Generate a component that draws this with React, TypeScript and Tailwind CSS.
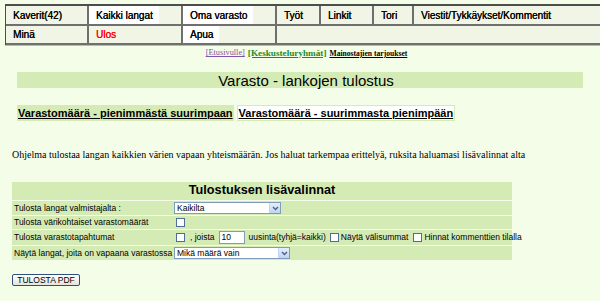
import React from 'react';

const sans = { fontFamily: '"Liberation Sans", Arial, sans-serif' };
const serif = { fontFamily: '"Liberation Serif", "Times New Roman", serif' };

const navTop = [
  { label: 'Kaverit(42)', white: false },
  { label: 'Kaikki langat', white: true },
  { label: 'Oma varasto', white: true },
  { label: 'Työt', white: false },
  { label: 'Linkit', white: false },
  { label: 'Tori', white: false },
  { label: 'Viestit/Tykkäykset/Kommentit', white: false },
];

// little XP-style dropdown
const Select = ({ value, width }: { value: string; width: string }) => (
  <div
    className={`flex h-[12px] items-center border border-[#7f9db9] bg-white ${width}`}
  >
    <span className="flex-1 pl-[2px] text-[8.5px] leading-none text-black">{value}</span>
    <span className="flex h-full w-[11px] items-center justify-center border-l border-[#c3d3fd] bg-gradient-to-b from-[#e6eefc] to-[#c0d3f5]">
      <svg width="7" height="5" viewBox="0 0 7 5">
        <path d="M1 1 L3.5 3.5 L6 1" stroke="#4d6185" strokeWidth="1.4" fill="none" />
      </svg>
    </span>
  </div>
);

const Check = () => (
  <span className="inline-block h-[9px] w-[9px] shrink-0 border border-[#4e6e97] bg-white" />
);

export default function App() {
  return (
    <div className="min-h-[301px] w-full overflow-hidden bg-[#f4fde7] text-black" style={sans}>
      {/* top navigation table */}
      <div className="pl-[5px] pt-[4px]">
        <div className="w-[700px] border-l border-t-2 border-[#4d4d4d] shadow-[0_1px_0_#b9bdb0] [text-shadow:0.3px_0_0_currentColor]">
          <div className="grid grid-cols-[83px_94px_94px_44px_53px_40px_292px]">
            {navTop.map((c) => (
              <div
                key={c.label}
                className="flex h-[20px] items-center border-b-2 border-r-2 border-[#6f6f6f] bg-[#f1f5e6] text-[10px]"
              >
                <span className={`h-full pl-[7px] pr-[6px] leading-[19px] ${c.white ? 'bg-white' : ''}`}>
                  {c.label}
                </span>
              </div>
            ))}
          </div>
          <div className="grid grid-cols-[83px_94px_94px_429px]">
            <div className="flex h-[19px] items-center border-b-2 border-r-2 border-[#6f6f6f] bg-[#f1f5e6] pl-[7px] text-[10px]">
              Minä
            </div>
            <div className="flex h-[19px] items-center border-b-2 border-r-2 border-[#6f6f6f] bg-[#f1f5e6] pl-[7px] text-[10px] text-[#ff0000]">
              Ulos
            </div>
            <div className="flex h-[19px] items-center border-b-2 border-r-2 border-[#6f6f6f] bg-[#f1f5e6] text-[10px]">
              <span className="h-full bg-white pl-[7px] pr-[6px] leading-[18px]">Apua</span>
            </div>
            <div className="h-[19px] border-b-2 border-[#6f6f6f] bg-[#f1f5e6]" />
          </div>
        </div>
      </div>

      {/* small links */}
      <div className="mt-[3px] flex h-[11px] items-center justify-center gap-[3px] pl-[13px]" style={serif}>
        <span className="text-[8.3px] text-[#7d55a8] underline">[Etusivulle]</span>
        <span className="text-[9.2px] font-bold text-[#1f8a2a] underline">[Keskusteluryhmät]</span>
        <span className="text-[7.6px] font-bold underline">Mainostajien tarjoukset</span>
      </div>

      {/* title band */}
      <div className="mx-[17px] mt-[13px] flex h-[16px] items-center justify-center bg-[#d5ebb5] pl-[12px] text-[15px] leading-none">
        Varasto - lankojen tulostus
      </div>

      {/* sort links */}
      <div className="ml-[17px] mt-[17px] flex h-[16px] items-stretch gap-[3px]">
        <span className="flex items-center bg-[#d5ebb5] px-[1px] text-[11px] font-bold underline">
          Varastomäärä - pienimmästä suurimpaan
        </span>
        <span className="flex items-center border border-[#d5ebb5] bg-white px-[1px] text-[11px] font-bold underline">
          Varastomäärä - suurimmasta pienimpään
        </span>
      </div>

      {/* description */}
      <p className="ml-[12px] mt-[28px] text-[10px] leading-[12px]" style={serif}>
        Ohjelma tulostaa langan kaikkien värien vapaan yhteismäärän. Jos haluat tarkempaa erittelyä, ruksita haluamasi lisävalinnat alta
      </p>

      {/* options table */}
      <div className="ml-[12px] mt-[21px] flex w-[500px] flex-col gap-[1px] text-[8.5px]">
        <div className="flex h-[18px] items-center justify-center bg-[#d5ebb5] text-[12.7px] font-bold">
          Tulostuksen lisävalinnat
        </div>
        <div className="grid h-[14px] grid-cols-[162px_1fr] items-center bg-[#d5ebb5]">
          <span className="pl-[2px]">Tulosta langat valmistajalta :</span>
          <Select value="Kaikilta" width="w-[107px]" />
        </div>
        <div className="grid h-[13px] grid-cols-[162px_1fr] items-center bg-[#d5ebb5]">
          <span className="pl-[2px]">Tulosta värikohtaiset varastomäärät</span>
          <span className="flex pl-[2px]">
            <Check />
          </span>
        </div>
        <div className="grid h-[15px] grid-cols-[162px_1fr] items-center bg-[#d5ebb5]">
          <span className="pl-[2px]">Tulosta varastotapahtumat</span>
          <span className="flex items-center whitespace-nowrap pl-[2px]">
            <Check />
            <span className="ml-[5px]">, joista</span>
            <span className="ml-[4px] flex h-[13px] w-[26px] items-center border border-[#7f9db9] bg-white pl-[2px]">
              10
            </span>
            <span className="ml-[4px]">uusinta(tyhjä=kaikki)</span>
            <span className="ml-[4px] flex">
              <Check />
            </span>
            <span className="ml-[2px]">Näytä välisummat</span>
            <span className="ml-[5px] flex">
              <Check />
            </span>
            <span className="ml-[2px]">Hinnat kommenttien tilalla</span>
          </span>
        </div>
        <div className="grid h-[14px] grid-cols-[162px_1fr] items-center bg-[#d5ebb5]">
          <span className="whitespace-nowrap pl-[2px]">Näytä langat, joita on vapaana varastossa</span>
          <Select value="Mikä määrä vain" width="w-[116px]" />
        </div>
      </div>

      <div className="ml-[12px] mt-[14px]">
        <button className="flex h-[12px] w-[68px] items-center justify-center rounded-[2px] border border-[#2f4f7a] bg-gradient-to-b from-[#ffffff] to-[#e4e4dc] text-[8.5px] leading-none">
          TULOSTA PDF
        </button>
      </div>
    </div>
  );
}
